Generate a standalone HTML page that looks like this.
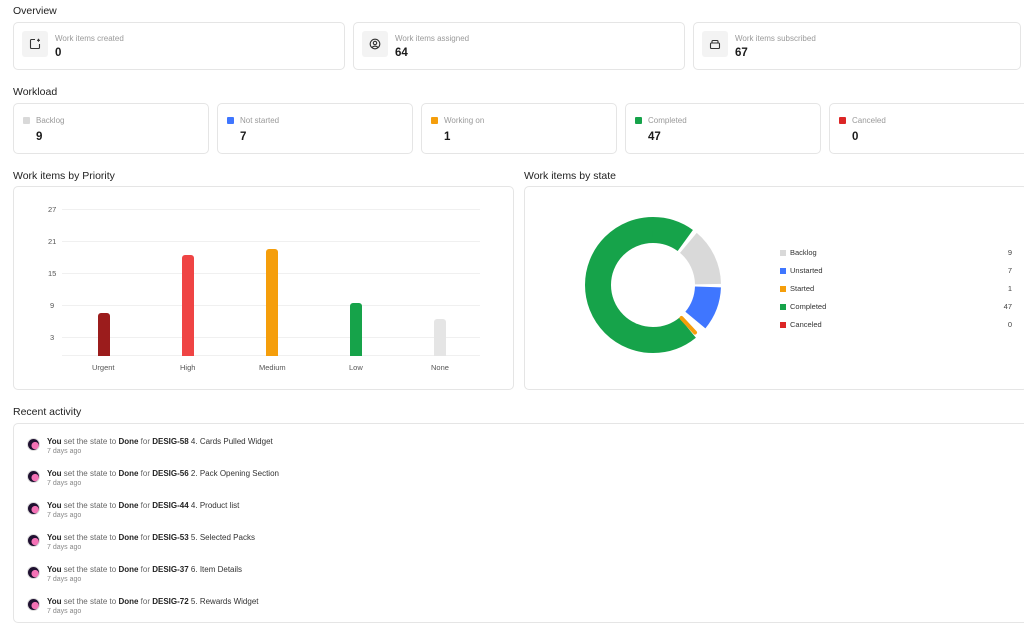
<!DOCTYPE html>
<html><head><style>
*{box-sizing:border-box;margin:0;padding:0}
body{width:1024px;height:616px;overflow:hidden;background:#fff;font-family:"Liberation Sans",sans-serif;color:#1f2937;position:relative}
.h{position:absolute;font-size:10.5px;font-weight:500;color:#222}
.card{position:absolute;border:1px solid #e5e5e5;border-radius:5px;background:#fff}
.ic{position:absolute;left:8px;top:8px;width:26px;height:26px;background:#f3f3f3;border-radius:3px;display:flex;align-items:center;justify-content:center}
.lbl{position:absolute;font-size:8px;color:#9a9a9a}
.num{position:absolute;font-size:11.5px;font-weight:bold;color:#1a1a1a}
.sq{position:absolute;width:7px;height:7px;border-radius:1px}
.ax{position:absolute;font-size:7.5px;color:#555}
.gl{position:absolute;left:62px;width:418px;height:1px;background:#f0f0f0}
.bar{position:absolute;width:12px;border-radius:3px 3px 0 0}
.leg{position:absolute;left:780px;width:232px;font-size:7.5px;color:#333}
.leg i{display:inline-block;width:6px;height:6px;margin-right:4px;vertical-align:-1px}
.leg b{float:right;font-weight:normal;color:#444}
.act{position:absolute;left:27px;font-size:8px;color:#666}
.act .av{position:absolute;left:0;top:1px;width:13px;height:13px;border-radius:50%;background:radial-gradient(circle at 65% 60%,#f472b6 0 35%,#1f1030 40%);border:1px solid #ddd}
.act .t{position:absolute;left:20px;top:0;white-space:nowrap}
.act .t b{color:#222}
.act .d{position:absolute;left:20px;top:11px;font-size:7px;color:#888;white-space:nowrap}
</style></head><body>
<div class="h" style="left:13px;top:5px">Overview</div>
<div class="card" style="left:13px;top:22px;width:332px;height:48px"><div class="ic"><svg width="12" height="12" viewBox="0 0 12 12" fill="none" stroke="#333" stroke-width="1.1"><path d="M6 1.5H2.5a1 1 0 0 0-1 1v7a1 1 0 0 0 1 1h7a1 1 0 0 0 1-1V6"/><path d="M9.5 0.8v3M8 2.3h3"/></svg></div><div class="lbl" style="left:41px;top:11px">Work items created</div><div class="num" style="left:41px;top:24px">0</div></div>
<div class="card" style="left:353px;top:22px;width:332px;height:48px"><div class="ic"><svg width="12" height="12" viewBox="0 0 12 12" fill="none" stroke="#333" stroke-width="1.1"><circle cx="6" cy="6" r="4.8"/><circle cx="6" cy="5" r="1.7"/><path d="M3.2 9.5c1-1.8 4.6-1.8 5.6 0"/></svg></div><div class="lbl" style="left:41px;top:11px">Work items assigned</div><div class="num" style="left:41px;top:24px">64</div></div>
<div class="card" style="left:693px;top:22px;width:328px;height:48px"><div class="ic"><svg width="12" height="12" viewBox="0 0 12 12" fill="none" stroke="#333" stroke-width="1.1"><rect x="1.5" y="5" width="9" height="5.5" rx="1"/><path d="M3 5V3.5a1 1 0 0 1 1-1h4a1 1 0 0 1 1 1V5"/></svg></div><div class="lbl" style="left:41px;top:11px">Work items subscribed</div><div class="num" style="left:41px;top:24px">67</div></div>

<div class="h" style="left:13px;top:86px">Workload</div>
<div class="card" style="left:13px;top:103px;width:196px;height:51px"><div class="sq" style="left:9px;top:13px;background:#d9d9d9"></div><div class="lbl" style="left:22px;top:12px">Backlog</div><div class="num" style="left:22px;top:27px">9</div></div>
<div class="card" style="left:217px;top:103px;width:196px;height:51px"><div class="sq" style="left:9px;top:13px;background:#3f76ff"></div><div class="lbl" style="left:22px;top:12px">Not started</div><div class="num" style="left:22px;top:27px">7</div></div>
<div class="card" style="left:421px;top:103px;width:196px;height:51px"><div class="sq" style="left:9px;top:13px;background:#f59e0b"></div><div class="lbl" style="left:22px;top:12px">Working on</div><div class="num" style="left:22px;top:27px">1</div></div>
<div class="card" style="left:625px;top:103px;width:196px;height:51px"><div class="sq" style="left:9px;top:13px;background:#16a34a"></div><div class="lbl" style="left:22px;top:12px">Completed</div><div class="num" style="left:22px;top:27px">47</div></div>
<div class="card" style="left:829px;top:103px;width:200px;height:51px"><div class="sq" style="left:9px;top:13px;background:#dc2626"></div><div class="lbl" style="left:22px;top:12px">Canceled</div><div class="num" style="left:22px;top:27px">0</div></div>

<div class="h" style="left:13px;top:170px">Work items by Priority</div>
<div class="card" style="left:13px;top:186px;width:501px;height:204px"></div>
<div class="gl" style="top:209px"></div><div class="gl" style="top:241px"></div><div class="gl" style="top:273px"></div><div class="gl" style="top:305px"></div><div class="gl" style="top:337px"></div><div class="gl" style="top:355px"></div>
<div class="ax" style="left:48px;top:205px">27</div><div class="ax" style="left:48px;top:237px">21</div><div class="ax" style="left:48px;top:269px">15</div><div class="ax" style="left:50px;top:301px">9</div><div class="ax" style="left:50px;top:333px">3</div>
<div class="bar" style="left:98px;top:313px;height:43px;background:#9b1c1c"></div>
<div class="bar" style="left:182px;top:255px;height:101px;background:#ef4444"></div>
<div class="bar" style="left:266px;top:249px;height:107px;background:#f59e0b"></div>
<div class="bar" style="left:350px;top:303px;height:53px;background:#16a34a"></div>
<div class="bar" style="left:434px;top:319px;height:37px;background:#e5e5e5"></div>
<div class="ax" style="left:92px;top:363px">Urgent</div><div class="ax" style="left:180px;top:363px">High</div><div class="ax" style="left:259px;top:363px">Medium</div><div class="ax" style="left:349px;top:363px">Low</div><div class="ax" style="left:431px;top:363px">None</div>

<div class="h" style="left:524px;top:170px">Work items by state</div>
<div class="card" style="left:524px;top:186px;width:504px;height:204px"></div>
<svg style="position:absolute;left:583px;top:215px" width="140" height="140" viewBox="0 0 140 140">
<g transform="rotate(-90 70 70)" fill="none" stroke-width="26">
<circle cx="70" cy="70" r="55" stroke="#d9d9d9" stroke-dasharray="47 400" stroke-dashoffset="-38.4"/>
<circle cx="70" cy="70" r="55" stroke="#3f76ff" stroke-dasharray="36 400" stroke-dashoffset="-88.3"/>
<circle cx="70" cy="70" r="55" stroke="#16a34a" stroke-dasharray="210.5 400" stroke-dashoffset="-135.1"/>
<circle cx="70" cy="70" r="55" stroke="#16a34a" stroke-dasharray="34.5 400" stroke-dashoffset="0"/>
</g>
<path d="M98.5 103 L112 117.5" stroke="#f59e0b" stroke-width="4" stroke-linecap="round"/>
</svg>
<div class="leg" style="top:248px"><i style="background:#d9d9d9"></i>Backlog<b>9</b></div>
<div class="leg" style="top:266px"><i style="background:#3f76ff"></i>Unstarted<b>7</b></div>
<div class="leg" style="top:284px"><i style="background:#f59e0b"></i>Started<b>1</b></div>
<div class="leg" style="top:302px"><i style="background:#16a34a"></i>Completed<b>47</b></div>
<div class="leg" style="top:320px"><i style="background:#dc2626"></i>Canceled<b>0</b></div>

<div class="h" style="left:13px;top:406px">Recent activity</div>
<div class="card" style="left:13px;top:423px;width:1020px;height:200px"></div>
<div class="act" style="top:437px"><div class="av"></div><div class="t"><b>You</b> set the state to <b>Done</b> for <b>DESIG-58</b> <span style="color:#333">4. Cards Pulled Widget</span></div><div class="d">7 days ago</div></div>
<div class="act" style="top:469px"><div class="av"></div><div class="t"><b>You</b> set the state to <b>Done</b> for <b>DESIG-56</b> <span style="color:#333">2. Pack Opening Section</span></div><div class="d">7 days ago</div></div>
<div class="act" style="top:501px"><div class="av"></div><div class="t"><b>You</b> set the state to <b>Done</b> for <b>DESIG-44</b> <span style="color:#333">4. Product list</span></div><div class="d">7 days ago</div></div>
<div class="act" style="top:533px"><div class="av"></div><div class="t"><b>You</b> set the state to <b>Done</b> for <b>DESIG-53</b> <span style="color:#333">5. Selected Packs</span></div><div class="d">7 days ago</div></div>
<div class="act" style="top:565px"><div class="av"></div><div class="t"><b>You</b> set the state to <b>Done</b> for <b>DESIG-37</b> <span style="color:#333">6. Item Details</span></div><div class="d">7 days ago</div></div>
<div class="act" style="top:597px"><div class="av"></div><div class="t"><b>You</b> set the state to <b>Done</b> for <b>DESIG-72</b> <span style="color:#333">5. Rewards Widget</span></div><div class="d">7 days ago</div></div>
</body></html>
